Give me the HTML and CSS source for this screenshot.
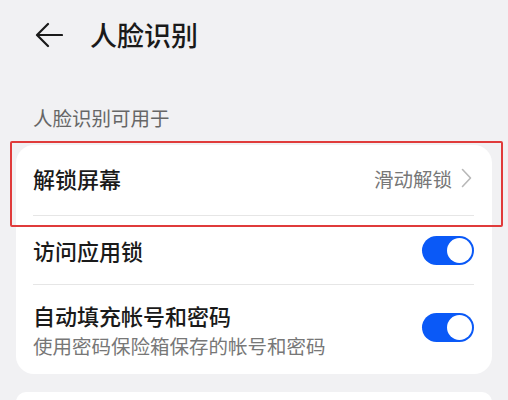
FILE: index.html
```html
<!DOCTYPE html>
<html lang="zh-CN">
<head>
<meta charset="utf-8">
<link rel="stylesheet" href="styles.css">
</head>
<body>
<div class="page">
  <header class="header">
    <svg class="back" width="28" height="26" viewBox="0 0 28 26">
      <path d="M27 13H2.5M13 2L2 13l11 11" fill="none" stroke="#1a1a1a" stroke-width="2.2" stroke-linecap="round" stroke-linejoin="round"/>
    </svg>
    <h1 class="title">人脸识别</h1>
  </header>
  <div class="section-label">人脸识别可用于</div>
  <div class="card">
    <div class="row row-1">
      <span class="row-title">解锁屏幕</span>
      <span class="row-value">滑动解锁
        <svg class="chev" width="11" height="20" viewBox="0 0 11 20"><path d="M1.5 1.5l8 8.5-8 8.5" fill="none" stroke="#b8b8b8" stroke-width="1.6" stroke-linecap="round" stroke-linejoin="round"/></svg>
      </span>
    </div>
    <div class="row row-2">
      <span class="row-title">访问应用锁</span>
      <span class="toggle"><span class="knob"></span></span>
    </div>
    <div class="row row-3">
      <div class="row-text">
        <span class="row-title">自动填充帐号和密码</span>
        <span class="row-sub">使用密码保险箱保存的帐号和密码</span>
      </div>
      <span class="toggle"><span class="knob"></span></span>
    </div>
  </div>
  <div class="card card-next"></div>
  <div class="highlight"></div>
</div>
</body>
</html>
```

FILE: styles.css
```css
html, body {
  margin: 0;
  padding: 0;
}
body {
  background: #f1f1f3;
  font-family: "Noto Sans CJK SC", "Noto Sans", sans-serif;
  color: #1a1a1a;
  width: 508px;
  height: 400px;
  overflow: hidden;
}
.page {
  position: relative;
  height: 400px;
  overflow: hidden;
}
.header {
  height: 70px;
  display: flex;
  align-items: center;
  padding-left: 35px;
}
.back {
  display: block;
  flex: none;
}
.title {
  margin: 0 0 0 27px;
  font-size: 27px;
  font-weight: 500;
  line-height: 36px;
  color: #1a1a1a;
}
.section-label {
  padding: 34px 0 13px 33px;
  font-size: 19.5px;
  line-height: 28px;
  color: #666;
}
.card {
  margin: 0 16px;
  background: #fff;
  border-radius: 18px;
  padding: 0 18px 0 17px;
}
.row {
  display: flex;
  align-items: center;
  justify-content: space-between;
}
.row + .row {
  border-top: 1px solid #e6e6e6;
}
.row-1 { height: 70px; padding-bottom: 4px; box-sizing: border-box; }
.row-2 { height: 68px; }
.row-3 { height: 89px; }
.row-title {
  font-size: 22px;
  font-weight: 500;
  line-height: 30px;
  color: #1a1a1a;
}
.row-value {
  display: flex;
  align-items: center;
  gap: 9px;
  font-size: 19.5px;
  color: #777;
  margin-right: 2px;
}
.chev { display: block; }
.row-text {
  display: flex;
  flex-direction: column;
}
.row-sub {
  font-size: 19.5px;
  line-height: 28px;
  color: #777;
  margin-top: 2px;
}
.toggle {
  width: 52px;
  height: 29px;
  border-radius: 15px;
  background: #0a59f7;
  display: flex;
  align-items: center;
  justify-content: flex-end;
  padding-right: 2px;
  box-sizing: border-box;
  flex: none;
}
.row-3 .toggle { margin-top: -4px; }
.knob {
  width: 25px;
  height: 25px;
  border-radius: 50%;
  background: #fff;
}
.card-next {
  margin-top: 18px;
  height: 10px;
  border-radius: 18px 18px 0 0;
}
.highlight {
  position: absolute;
  left: 10px;
  top: 141px;
  width: 493px;
  height: 86px;
  box-sizing: border-box;
  border: 2px solid #e03b3b;
  border-radius: 2px;
}
```
